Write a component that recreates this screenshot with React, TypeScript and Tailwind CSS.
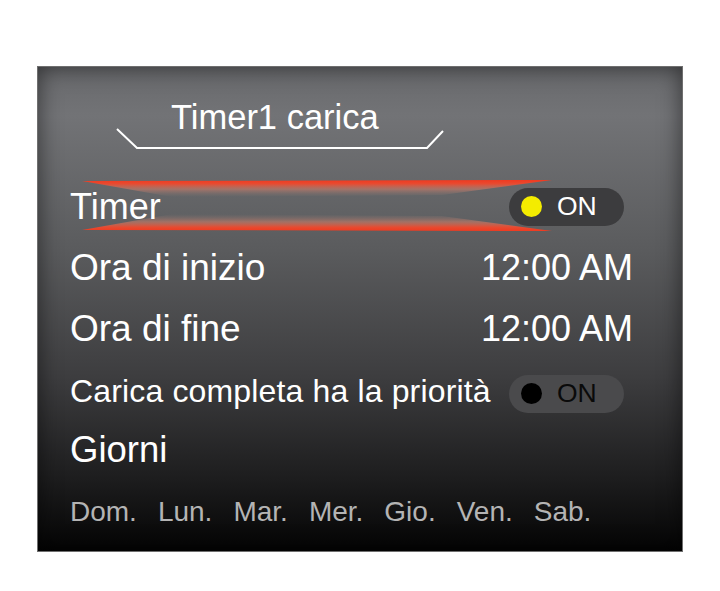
const days = ['Dom.', 'Lun.', 'Mar.', 'Mer.', 'Gio.', 'Ven.', 'Sab.'];

const Highlight = () => (
	<svg
		className="absolute left-[44px] top-[4px]"
		width="470"
		height="52"
		viewBox="0 0 470 52"
	>
		<defs>
			<linearGradient id="topFade" x1="0" y1="0" x2="0" y2="1">
				<stop offset="0" stopColor="#f03a20" />
				<stop offset="0.22" stopColor="#e84a30" />
				<stop offset="0.55" stopColor="#c47a68" stopOpacity="0.65" />
				<stop offset="1" stopColor="#8a7a76" stopOpacity="0" />
			</linearGradient>
			<linearGradient id="botFade" x1="0" y1="1" x2="0" y2="0">
				<stop offset="0" stopColor="#f03a20" />
				<stop offset="0.22" stopColor="#e84a30" />
				<stop offset="0.55" stopColor="#c47a68" stopOpacity="0.65" />
				<stop offset="1" stopColor="#8a7a76" stopOpacity="0" />
			</linearGradient>
		</defs>
		<polygon points="0,1 470,0 360,15 90,17" fill="url(#topFade)" />
		<polygon points="0,50 470,51 360,36 90,34" fill="url(#botFade)" />
	</svg>
);

const Toggle = ({ dark }: { dark?: boolean }) => (
	<div
		className={`flex h-[38px] w-[115px] items-center rounded-full pl-[12px] ${
			dark ? 'bg-[#4a4a4c]' : 'bg-[#3c3c3e]'
		}`}
	>
		<span
			className={`h-[21px] w-[21px] rounded-full ${dark ? 'bg-black' : 'bg-[#f4ec00]'}`}
		/>
		<span
			className={`ml-[15px] text-[26.5px] leading-none ${dark ? 'text-[#0a0a0a]' : 'text-white'}`}
		>
			ON
		</span>
	</div>
);

export default function App() {
	return (
		<div
			className="min-h-[591px] w-[720px] bg-white pl-[37px] pt-[66px]"
			style={{ fontFamily: '"Liberation Sans", Arial, sans-serif' }}
		>
			<div className="flex h-[486px] w-[646px] flex-col border border-[#6f6f6f] bg-[linear-gradient(to_bottom,#68696c_0%,#727376_10%,#5a5b5d_38%,#3d3d3f_64%,#1d1d1e_85%,#040404_100%)] text-white shadow-[inset_0_0_22px_rgba(0,0,0,0.55)]">
				{/* header */}
				<div className="h-[109px] pt-[33px]">
					<div className="pl-[133px] text-[34.5px] leading-none">Timer1 carica</div>
					<svg className="-mt-[8px]" width="420" height="24" viewBox="0 0 420 24">
						<polyline
							points="79,2 99,21 389,21 405,4"
							fill="none"
							stroke="white"
							strokeWidth="2"
						/>
					</svg>
				</div>

				{/* rows */}
				<div className="relative flex h-[61px] items-center justify-between pl-[32px] pr-[58px]">
					<Highlight />
					<span className="relative text-[36px]">Timer</span>
					<div className="relative">
						<Toggle />
					</div>
				</div>
				<div className="flex h-[61px] items-center justify-between pl-[32px] pr-[49px]">
					<span className="text-[37px]">Ora di inizio</span>
					<span className="text-[36px]">12:00 AM</span>
				</div>
				<div className="flex h-[61px] items-center justify-between pl-[32px] pr-[49px]">
					<span className="text-[37px]">Ora di fine</span>
					<span className="text-[36px]">12:00 AM</span>
				</div>
				<div className="flex h-[61px] items-center justify-between pl-[32px] pr-[58px]">
					<span className="mt-[3px] text-[32px] tracking-[0.15px]">
						Carica completa ha la priorità
					</span>
					<div className="mt-[8px]">
						<Toggle dark />
					</div>
				</div>
				<div className="flex h-[61px] items-center pl-[32px] text-[36.5px]">Giorni</div>
				<div className="flex h-[61px] items-center gap-[21px] pl-[32px] text-[28px] text-[#b4b4b4]">
					{days.map((d) => (
						<span key={d}>{d}</span>
					))}
				</div>
			</div>
		</div>
	);
}
